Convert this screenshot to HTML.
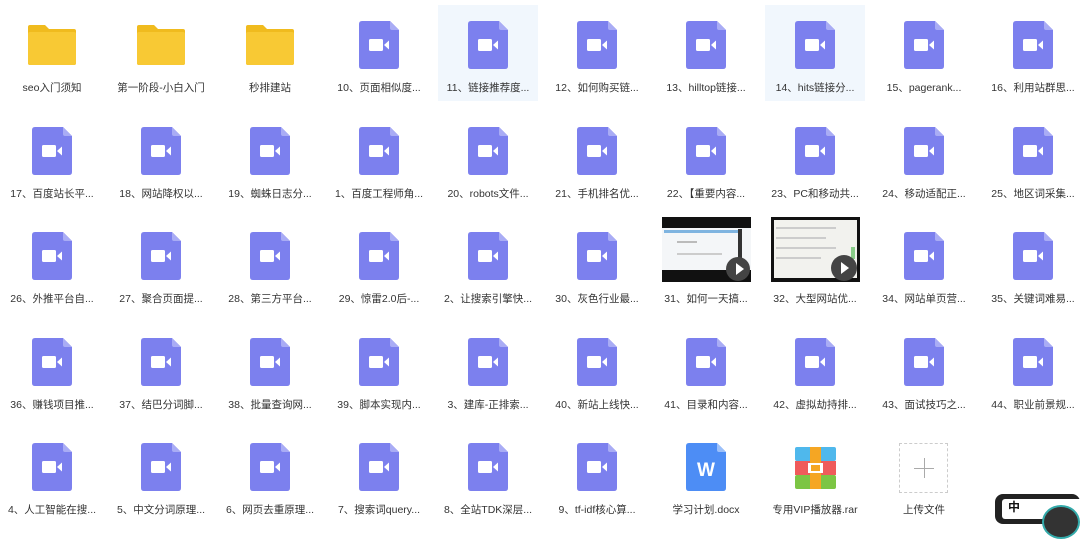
<!DOCTYPE html>
<html><head><meta charset="utf-8"><style>
body{margin:0;width:1080px;height:517px;overflow:hidden;background:#fff;position:relative;font-family:"Liberation Sans","Noto Sans CJK SC",sans-serif}
.it{position:absolute;width:100px;height:96px}
.hl{background:#f1f7fd}
.ic{position:absolute;left:30px;top:16px;width:40px;height:48px}
.fd{position:absolute;left:26px;top:20px;width:48px;height:40px}
.lb{position:absolute;left:-5px;width:110px;top:76px;font-size:10.5px;color:#333;text-align:center;white-space:nowrap;line-height:14px}
.th{position:absolute;left:6px;top:1px;width:89px;height:65px;background:#111;overflow:hidden}
</style></head><body>
<svg width="0" height="0" style="position:absolute">
<defs>
<symbol id="v" viewBox="0 0 40 48"><path d="M3 0H31L40 9V45Q40 48 37 48H3Q0 48 0 45V3Q0 0 3 0Z" fill="#7c80ee"/><path d="M31 0L40 9H33Q31 9 31 7Z" fill="#a9acf5"/><rect x="10" y="18" width="14" height="12" rx="1.5" fill="#fff"/><path d="M25 24L30 19.5V28.5Z" fill="#fff"/></symbol>
<symbol id="f" viewBox="0 0 48 40"><path d="M2 0H17L21 4H46Q48 4 48 6V38Q48 40 46 40H2Q0 40 0 38V2Q0 0 2 0Z" fill="#f0bb1e"/><rect x="0" y="7" width="48" height="33" rx="2" fill="#f8c934"/></symbol>
</defs></svg>

<!-- row 1 -->
<div class="it" style="left:2px;top:5px"><svg class="fd"><use href="#f"/></svg><div class="lb">seo入门须知</div></div>
<div class="it" style="left:111px;top:5px"><svg class="fd"><use href="#f"/></svg><div class="lb">第一阶段-小白入门</div></div>
<div class="it" style="left:220px;top:5px"><svg class="fd"><use href="#f"/></svg><div class="lb">秒排建站</div></div>
<div class="it" style="left:329px;top:5px"><svg class="ic"><use href="#v"/></svg><div class="lb">10、页面相似度...</div></div>
<div class="it hl" style="left:438px;top:5px"><svg class="ic"><use href="#v"/></svg><div class="lb">11、链接推荐度...</div></div>
<div class="it" style="left:547px;top:5px"><svg class="ic"><use href="#v"/></svg><div class="lb">12、如何购买链...</div></div>
<div class="it" style="left:656px;top:5px"><svg class="ic"><use href="#v"/></svg><div class="lb">13、hilltop链接...</div></div>
<div class="it hl" style="left:765px;top:5px"><svg class="ic"><use href="#v"/></svg><div class="lb">14、hits链接分...</div></div>
<div class="it" style="left:874px;top:5px"><svg class="ic"><use href="#v"/></svg><div class="lb">15、pagerank...</div></div>
<div class="it" style="left:983px;top:5px"><svg class="ic"><use href="#v"/></svg><div class="lb">16、利用站群思...</div></div>
<!-- row 2 -->
<div class="it" style="left:2px;top:111px"><svg class="ic"><use href="#v"/></svg><div class="lb">17、百度站长平...</div></div>
<div class="it" style="left:111px;top:111px"><svg class="ic"><use href="#v"/></svg><div class="lb">18、网站降权以...</div></div>
<div class="it" style="left:220px;top:111px"><svg class="ic"><use href="#v"/></svg><div class="lb">19、蜘蛛日志分...</div></div>
<div class="it" style="left:329px;top:111px"><svg class="ic"><use href="#v"/></svg><div class="lb">1、百度工程师角...</div></div>
<div class="it" style="left:438px;top:111px"><svg class="ic"><use href="#v"/></svg><div class="lb">20、robots文件...</div></div>
<div class="it" style="left:547px;top:111px"><svg class="ic"><use href="#v"/></svg><div class="lb">21、手机排名优...</div></div>
<div class="it" style="left:656px;top:111px"><svg class="ic"><use href="#v"/></svg><div class="lb">22、【重要内容...</div></div>
<div class="it" style="left:765px;top:111px"><svg class="ic"><use href="#v"/></svg><div class="lb">23、PC和移动共...</div></div>
<div class="it" style="left:874px;top:111px"><svg class="ic"><use href="#v"/></svg><div class="lb">24、移动适配正...</div></div>
<div class="it" style="left:983px;top:111px"><svg class="ic"><use href="#v"/></svg><div class="lb">25、地区词采集...</div></div>
<!-- row 3 -->
<div class="it" style="left:2px;top:216px"><svg class="ic"><use href="#v"/></svg><div class="lb">26、外推平台自...</div></div>
<div class="it" style="left:111px;top:216px"><svg class="ic"><use href="#v"/></svg><div class="lb">27、聚合页面提...</div></div>
<div class="it" style="left:220px;top:216px"><svg class="ic"><use href="#v"/></svg><div class="lb">28、第三方平台...</div></div>
<div class="it" style="left:329px;top:216px"><svg class="ic"><use href="#v"/></svg><div class="lb">29、惊雷2.0后-...</div></div>
<div class="it" style="left:438px;top:216px"><svg class="ic"><use href="#v"/></svg><div class="lb">2、让搜索引擎快...</div></div>
<div class="it" style="left:547px;top:216px"><svg class="ic"><use href="#v"/></svg><div class="lb">30、灰色行业最...</div></div>
<div class="it" style="left:656px;top:216px"><div class="th">
<div style="position:absolute;left:0;top:11px;width:89px;height:42px;background:#f4f6f8"></div>
<div style="position:absolute;left:2px;top:13px;width:76px;height:3px;background:#7fb4e0"></div>
<div style="position:absolute;left:76px;top:12px;width:4px;height:42px;background:#333"></div>
<div style="position:absolute;left:15px;top:24px;width:20px;height:2px;background:#bbb"></div>
<div style="position:absolute;left:15px;top:36px;width:45px;height:2px;background:#ccc"></div>
<div style="position:absolute;left:64px;top:40px;width:24px;height:24px;border-radius:50%;background:#444"></div>
<div style="position:absolute;left:74px;top:46px;width:0;height:0;border-left:8px solid #fff;border-top:6px solid transparent;border-bottom:6px solid transparent"></div>
</div><div class="lb">31、如何一天搞...</div></div>
<div class="it" style="left:765px;top:216px"><div class="th">
<div style="position:absolute;left:3px;top:3px;width:83px;height:58px;background:#f2f2ee"></div>
<div style="position:absolute;left:5px;top:10px;width:60px;height:2px;background:#ccc"></div>
<div style="position:absolute;left:5px;top:20px;width:50px;height:2px;background:#ccc"></div>
<div style="position:absolute;left:5px;top:30px;width:60px;height:2px;background:#ccc"></div>
<div style="position:absolute;left:5px;top:40px;width:45px;height:2px;background:#ccc"></div>
<div style="position:absolute;left:80px;top:30px;width:4px;height:12px;background:#8c8"></div>
<div style="position:absolute;left:60px;top:38px;width:26px;height:26px;border-radius:50%;background:#444"></div>
<div style="position:absolute;left:70px;top:45px;width:0;height:0;border-left:8px solid #fff;border-top:6px solid transparent;border-bottom:6px solid transparent"></div>
</div><div class="lb">32、大型网站优...</div></div>
<div class="it" style="left:874px;top:216px"><svg class="ic"><use href="#v"/></svg><div class="lb">34、网站单页营...</div></div>
<div class="it" style="left:983px;top:216px"><svg class="ic"><use href="#v"/></svg><div class="lb">35、关键词难易...</div></div>
<!-- row 4 -->
<div class="it" style="left:2px;top:322px"><svg class="ic"><use href="#v"/></svg><div class="lb">36、赚钱项目推...</div></div>
<div class="it" style="left:111px;top:322px"><svg class="ic"><use href="#v"/></svg><div class="lb">37、结巴分词脚...</div></div>
<div class="it" style="left:220px;top:322px"><svg class="ic"><use href="#v"/></svg><div class="lb">38、批量查询网...</div></div>
<div class="it" style="left:329px;top:322px"><svg class="ic"><use href="#v"/></svg><div class="lb">39、脚本实现内...</div></div>
<div class="it" style="left:438px;top:322px"><svg class="ic"><use href="#v"/></svg><div class="lb">3、建库-正排索...</div></div>
<div class="it" style="left:547px;top:322px"><svg class="ic"><use href="#v"/></svg><div class="lb">40、新站上线快...</div></div>
<div class="it" style="left:656px;top:322px"><svg class="ic"><use href="#v"/></svg><div class="lb">41、目录和内容...</div></div>
<div class="it" style="left:765px;top:322px"><svg class="ic"><use href="#v"/></svg><div class="lb">42、虚拟劫持排...</div></div>
<div class="it" style="left:874px;top:322px"><svg class="ic"><use href="#v"/></svg><div class="lb">43、面试技巧之...</div></div>
<div class="it" style="left:983px;top:322px"><svg class="ic"><use href="#v"/></svg><div class="lb">44、职业前景规...</div></div>
<!-- row 5 -->
<div class="it" style="left:2px;top:427px"><svg class="ic"><use href="#v"/></svg><div class="lb">4、人工智能在搜...</div></div>
<div class="it" style="left:111px;top:427px"><svg class="ic"><use href="#v"/></svg><div class="lb">5、中文分词原理...</div></div>
<div class="it" style="left:220px;top:427px"><svg class="ic"><use href="#v"/></svg><div class="lb">6、网页去重原理...</div></div>
<div class="it" style="left:329px;top:427px"><svg class="ic"><use href="#v"/></svg><div class="lb">7、搜索词query...</div></div>
<div class="it" style="left:438px;top:427px"><svg class="ic"><use href="#v"/></svg><div class="lb">8、全站TDK深层...</div></div>
<div class="it" style="left:547px;top:427px"><svg class="ic"><use href="#v"/></svg><div class="lb">9、tf-idf核心算...</div></div>
<div class="it" style="left:656px;top:427px"><svg class="ic" viewBox="0 0 40 48"><path d="M3 0H31L40 9V45Q40 48 37 48H3Q0 48 0 45V3Q0 0 3 0Z" fill="#4d8df5"/><path d="M31 0L40 9H33Q31 9 31 7Z" fill="#9cc0fa"/><text x="20" y="33" text-anchor="middle" font-family="Liberation Sans" font-weight="bold" font-size="19" fill="#fff">W</text></svg><div class="lb">学习计划.docx</div></div>
<div class="it" style="left:765px;top:427px"><svg style="position:absolute;left:30px;top:20px;width:41px;height:42px" viewBox="0 0 41 42"><rect width="41" height="14" rx="2" fill="#4fb8ec"/><rect y="14" width="41" height="14" fill="#ef5b5b"/><rect y="28" width="41" height="14" rx="2" fill="#7cc544"/><rect x="15" width="11" height="42" fill="#f5a623"/><rect x="13" y="16" width="15" height="10" fill="#fff"/><rect x="16" y="18" width="9" height="6" fill="#f5a623"/></svg><div class="lb">专用VIP播放器.rar</div></div>
<div class="it" style="left:874px;top:427px"><div style="position:absolute;left:25px;top:16px;width:49px;height:50px;border:1px dashed #ccc;box-sizing:border-box"></div><div style="position:absolute;left:40px;top:41px;width:20px;height:1px;background:#aaa"></div><div style="position:absolute;left:50px;top:31px;width:1px;height:20px;background:#aaa"></div><div class="lb">上传文件</div></div>
<div style="position:absolute;left:995px;top:494px;width:85px;height:30px;background:#222;border-radius:8px"></div>
<div style="position:absolute;left:1002px;top:499px;width:80px;height:20px;background:#fff;border-radius:3px;font-size:12px;font-weight:bold;padding-left:6px;color:#111;line-height:16px">中</div>
<div style="position:absolute;left:1042px;top:505px;width:34px;height:30px;border-radius:50%;background:#333;border:2px solid #3aa"></div>
</body></html>
